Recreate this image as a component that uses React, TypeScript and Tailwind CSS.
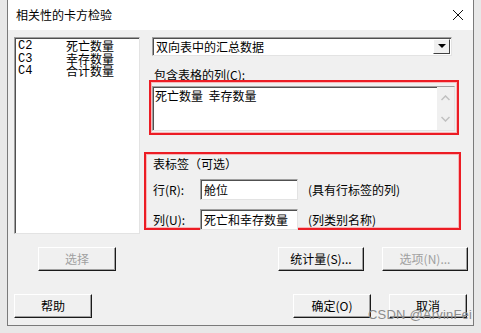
import React from 'react'

const cjk = { fontFamily: '"Noto Sans CJK SC", "Liberation Sans", sans-serif' }

function Btn({ label, w, disabled }: { label: React.ReactNode; w: string; disabled?: boolean }) {
  return (
    <div
      className={`${w} h-[24px] flex items-center justify-center text-[12px] bg-[#f0f0f0] border-t border-l border-white border-b border-r border-b-[#1a1a1a] border-r-[#1a1a1a] shadow-[inset_-1px_-1px_0_#a0a0a0] ${
        disabled ? 'text-[#a0a0a0]' : 'text-black'
      }`}
    >
      {label}
    </div>
  )
}

function Sunken({ className, children }: { className: string; children?: React.ReactNode }) {
  return (
    <div
      className={`${className} bg-white border-t border-l border-[#a0a0a0] border-b border-r border-b-[#e3e3e3] border-r-[#e3e3e3] shadow-[inset_1px_1px_0_#505050]`}
    >
      {children}
    </div>
  )
}

export default function App() {
  const cols = [
    ['C2', '死亡数量'],
    ['C3', '幸存数量'],
    ['C4', '合计数量'],
  ]

  return (
    <div className="w-[481px] h-[333px] bg-[#e8e8e8] relative overflow-hidden" style={cjk}>
      <div className="ml-[7px] w-[467px] h-[326px] border-l border-r border-b border-[#7a7a7a] flex flex-col">
        {/* 标题栏 */}
        <div className="h-[30px] bg-white flex items-center justify-between pl-[8px] pr-[9px]">
          <span className="text-[12px] text-black">相关性的卡方检验</span>
          <svg width="12" height="12" viewBox="0 0 12 12">
            <path d="M1 1L11 11M11 1L1 11" stroke="#111" strokeWidth="1" fill="none" />
          </svg>
        </div>

        <div className="flex-1 bg-[#f0f0f0] pl-[6px] pt-[7px]">
          <div className="flex">
            {/* 变量列表 */}
            <Sunken className="w-[126px] h-[197px] pt-[2px] pl-[3px]">
              {cols.map(([c, n]) => (
                <div key={c} className="flex h-[12.5px] items-center text-[12px] leading-[12px]">
                  <span className="w-[48px] text-[12px]" style={{ fontFamily: '"Liberation Mono", monospace' }}>
                    {c}
                  </span>
                  <span className="text-[12px]">{n}</span>
                </div>
              ))}
            </Sunken>

            <div className="ml-[4px] w-[317px] flex flex-col">
              {/* 下拉框 */}
              <Sunken className="ml-[8px] w-[300px] h-[19px] flex items-center justify-between pl-[3px] pr-[1px]">
                <span className="text-[12px]">双向表中的汇总数据</span>
                <div className="w-[17px] h-[15px] bg-[#f0f0f0] flex items-center justify-center border-t border-l border-white border-b border-r border-b-[#404040] border-r-[#404040]">
                  <svg width="8" height="5" viewBox="0 0 8 5">
                    <path d="M0 0H8L4 4Z" fill="#000" />
                  </svg>
                </div>
              </Sunken>

              <div className="ml-[10px] mt-[13px] h-[12px] text-[12px] leading-[12px]">包含表格的列(C):</div>

              <div className="ml-[5px] mt-[-1px] w-[310px] h-[55px] border-2 border-[#ec1c24] shadow-[inset_0_0_0_1px_#f6b8ba] pt-[4px] pl-[1px] pr-[2px] pb-[2px] flex">
                <Sunken className="flex-1 flex">
                  <div className="flex-1 pl-[2px] pt-[2px] text-[12px] leading-[14px] whitespace-pre">死亡数量  幸存数量</div>
                  <div className="w-[17px] bg-[#f0f0f0] flex flex-col items-center justify-between py-[8px]">
                    <svg width="9" height="6" viewBox="0 0 9 6">
                      <path d="M0.5 5L4.5 1L8.5 5" stroke="#c0c0c0" strokeWidth="1.5" fill="none" />
                    </svg>
                    <svg width="9" height="6" viewBox="0 0 9 6">
                      <path d="M0.5 1L4.5 5L8.5 1" stroke="#c0c0c0" strokeWidth="1.5" fill="none" />
                    </svg>
                  </div>
                </Sunken>
              </div>

              {/* 表标签 */}
              <div className="mt-[17px] w-[317px] h-[78px] border-2 border-[#ec1c24] shadow-[inset_0_0_0_1px_#f6b8ba] pl-[7px] pt-[3px] text-[12px]">
                <div className="h-[14px] leading-[14px]">表标签（可选）</div>
                <div className="flex items-center mt-[8px]">
                  <span className="w-[47px]">行(R):</span>
                  <Sunken className="w-[98px] h-[21px] flex items-center pl-[3px] text-[12px]">舱位</Sunken>
                  <span className="ml-[10px]">(具有行标签的列)</span>
                </div>
                <div className="flex items-center mt-[9px]">
                  <span className="w-[47px]">列(U):</span>
                  <Sunken className="w-[98px] h-[21px] flex items-center pl-[3px] text-[12px]">死亡和幸存数量</Sunken>
                  <span className="ml-[10px]">(列类别名称)</span>
                </div>
              </div>
            </div>
          </div>

          {/* 按钮 */}
          <div className="flex mt-[13px]">
            <div className="ml-[24px]">
              <Btn label="选择" w="w-[78px]" disabled />
            </div>
            <div className="ml-[162px]">
              <Btn label="统计量(S)..." w="w-[86px]" />
            </div>
            <div className="ml-[18px]">
              <Btn label="选项(N)..." w="w-[86px]" disabled />
            </div>
          </div>
          <div className="flex mt-[23px]">
            <Btn label="帮助" w="w-[78px]" />
            <div className="ml-[201px]">
              <Btn label="确定(O)" w="w-[78px]" />
            </div>
            <div className="ml-[18px]">
              <Btn label="取消" w="w-[78px]" />
            </div>
          </div>
        </div>
      </div>

      <div
        className="absolute left-[368px] top-[305px] text-[13px] text-[#8c8c8c] tracking-[0.2px]"
        style={{ fontFamily: '"Liberation Sans", Arial, sans-serif' }}
      >
        CSDN @ArvinFei
      </div>
    </div>
  )
}
